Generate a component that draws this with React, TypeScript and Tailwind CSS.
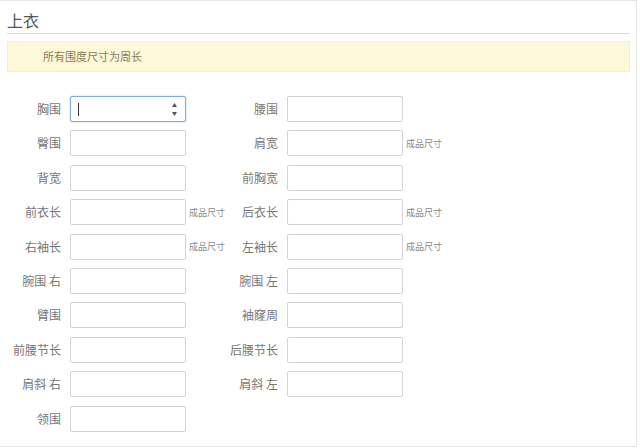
const font = { fontFamily: '"Noto Sans CJK SC", "Liberation Sans", sans-serif' };

type Field = { label: string; note?: boolean };

const rows: [Field, Field | null][] = [
  [{ label: "胸围" }, { label: "腰围" }],
  [{ label: "臀围" }, { label: "肩宽", note: true }],
  [{ label: "背宽" }, { label: "前胸宽" }],
  [{ label: "前衣长", note: true }, { label: "后衣长", note: true }],
  [{ label: "右袖长", note: true }, { label: "左袖长", note: true }],
  [{ label: "腕围 右" }, { label: "腕围 左" }],
  [{ label: "臂围" }, { label: "袖窿周" }],
  [{ label: "前腰节长" }, { label: "后腰节长" }],
  [{ label: "肩斜 右" }, { label: "肩斜 左" }],
  [{ label: "领围" }, null],
];

function FocusedInput() {
  return (
    <div className="relative h-[26px] w-[116px] rounded-[2px] border border-[#7fa9dc] bg-white shadow-[0_0_2px_rgba(102,175,233,0.5)]">
      <div className="absolute left-[7px] top-[6px] h-[13px] w-px bg-[#333]" />
      <svg className="absolute right-[7px] top-[5px]" width="7" height="15" viewBox="0 0 7 15">
        <path d="M3.5 1 L6 5 L1 5 Z" fill="#555" />
        <path d="M3.5 14 L6 10 L1 10 Z" fill="#555" />
      </svg>
    </div>
  );
}

function Cell({ field, focused }: { field: Field; focused?: boolean }) {
  return (
    <div className="flex h-[26px] w-[217px] shrink-0 items-center">
      <span className="w-[61px] shrink-0 whitespace-nowrap text-right text-[12px] leading-none text-[#777]">{field.label}</span>
      <div className="ml-[9px] shrink-0">
        {focused ? (
          <FocusedInput />
        ) : (
          <div className="h-[26px] w-[116px] rounded-[2px] border border-[#d4d4d4] bg-white" />
        )}
      </div>
      {field.note ? (
        <span className="ml-[3px] shrink-0 whitespace-nowrap text-[9px] leading-none text-[#888]">成品尺寸</span>
      ) : null}
    </div>
  );
}

export default function App() {
  return (
    <div className="h-[448px] w-[640px] overflow-hidden bg-white" style={font}>
      <div className="h-[447px] w-[637px] border-b border-r border-t border-[#e6e6e6] pl-[7px] pr-[6px]">
        <div className="h-[33px] border-b border-[#dcdde3] pt-[9px]">
          <h2 className="text-[16px] leading-[20px] text-[#555]">上衣</h2>
        </div>
        <div className="mt-[7px] flex h-[31px] items-center border border-[#f7efc3] bg-[#fdf8d8] pl-[35px]">
          <span className="text-[11px] leading-none text-[#8a7a55]">所有围度尺寸为周长</span>
        </div>
        <div className="-ml-[7px] mt-[24px] flex flex-col gap-[8.4px]">
          {rows.map(([a, b], i) => (
            <div key={i} className="flex">
              <Cell field={a} focused={i === 0} />
              {b ? <Cell field={b} /> : null}
            </div>
          ))}
        </div>
      </div>
    </div>
  );
}
